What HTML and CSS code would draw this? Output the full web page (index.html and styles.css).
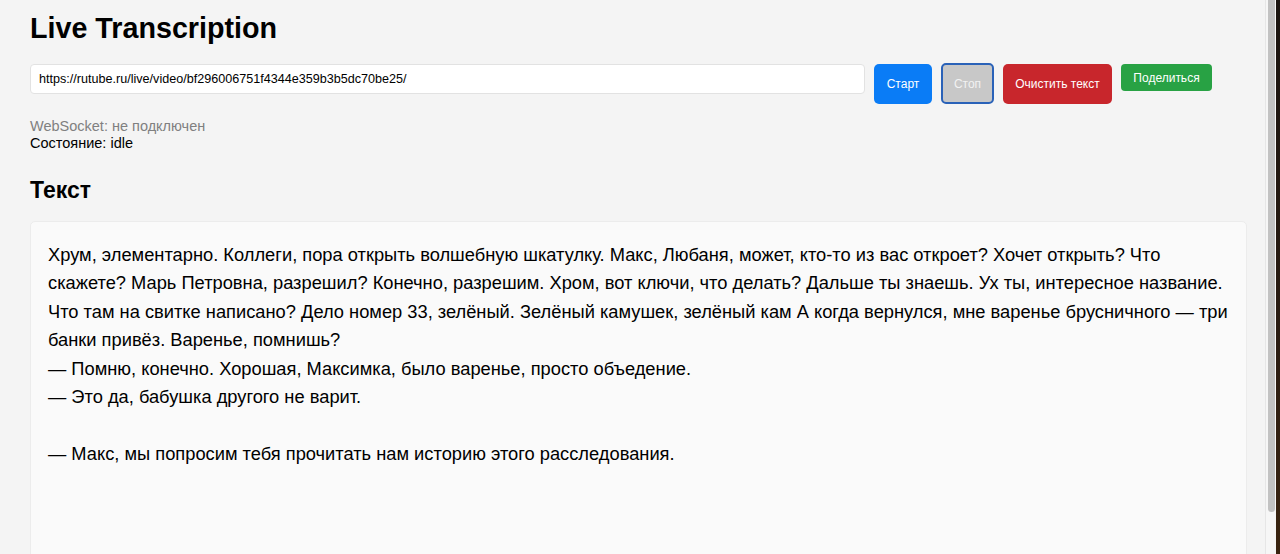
FILE: index.html
```html
<!DOCTYPE html>
<html lang="ru">
<head>
<meta charset="utf-8">
<title>Live Transcription</title>
<link rel="stylesheet" href="styles.css">
</head>
<body>
<div class="window">
  <main class="page">
    <h1 class="title">Live Transcription</h1>
    <div class="controls">
      <input class="url" type="text" value="https://rutube.ru/live/video/bf296006751f4344e359b3b5dc70be25/">
      <button class="btn btn-start">Старт</button>
      <button class="btn btn-stop">Стоп</button>
      <button class="btn btn-clear">Очистить текст</button>
      <button class="btn btn-share">Поделиться</button>
    </div>
    <div class="status">
      <div class="ws">WebSocket: не подключен</div>
      <div class="state">Состояние: idle</div>
    </div>
    <h2 class="subtitle">Текст</h2>
    <div class="transcript">Хрум, элементарно. Коллеги, пора открыть волшебную шкатулку. Макс, Любаня, может, кто-то из вас откроет? Хочет открыть? Что скажете? Марь Петровна, разрешил? Конечно, разрешим. Хром, вот ключи, что делать? Дальше ты знаешь. Ух ты, интересное название. Что там на свитке написано? Дело номер 33, зелёный. Зелёный камушек, зелёный кам А когда вернулся, мне варенье брусничного — три банки привёз. Варенье, помнишь?
— Помню, конечно. Хорошая, Максимка, было варенье, просто объедение.
— Это да, бабушка другого не варит.

— Макс, мы попросим тебя прочитать нам историю этого расследования.</div>
  </main>
  <div class="scrollbar"><div class="thumb"></div></div>
  <div class="edge"></div>
</div>
</body>
</html>
```

FILE: styles.css
```css
* { box-sizing: border-box; }
html, body {
  margin: 0;
  padding: 0;
  height: 554px;
  overflow: hidden;
}
body {
  font-family: "Liberation Sans", Arial, sans-serif;
  background: #f4f4f4;
  color: #000;
}
.window {
  display: flex;
  height: 554px;
}
.page {
  flex: 1;
  padding: 0 18px 0 30px;
  min-width: 0;
}
.title {
  font-size: 28.7px;
  line-height: 32px;
  font-weight: bold;
  margin: 12px 0 0;
}
.controls {
  display: flex;
  align-items: flex-start;
  gap: 9px;
  margin: 20px 35px 0 0;
}
.url {
  flex: 1;
  height: 30px;
  border: 1px solid #e2e2e2;
  border-radius: 4px;
  background: #fff;
  padding: 0 8px;
  font-family: "Liberation Sans", Arial, sans-serif;
  font-size: 12.6px;
  color: #000;
  outline: none;
}
.btn {
  font-family: "Liberation Sans", Arial, sans-serif;
  font-size: 12px;
  color: #fff;
  border: none;
  border-radius: 5px;
  height: 40px;
  padding: 0;
  cursor: pointer;
}
.btn-start { background: #0a7cf6; width: 58px; }
.btn-stop {
  background: #c8c8c8;
  color: #f2f2f2;
  border: 2px solid #2a62b8;
  width: 53px;
  height: 41px;
  margin-top: -1px;
}
.btn-clear { background: #c8262c; width: 109px; }
.btn-share {
  background: #28a244;
  width: 91px;
  height: 27px;
  border-radius: 4px;
}
.status {
  margin-top: 14px;
  font-size: 14.5px;
  line-height: 17px;
}
.ws { color: #808080; }
.state { color: #000; }
.subtitle {
  font-size: 23px;
  line-height: 26px;
  font-weight: bold;
  margin: 25px 0 0;
}
.transcript {
  margin-top: 18px;
  min-height: 400px;
  background: #fafafa;
  border: 1px solid #ececec;
  border-radius: 5px;
  padding: 19px 17px;
  font-size: 18.3px;
  line-height: 28.4px;
  white-space: pre-wrap;
}
.scrollbar {
  width: 11px;
  flex: none;
  background: #f6f6f6;
  border-left: 1px solid #e6e6e6;
  padding: 0 1px 0 2px;
}
.thumb {
  width: 7px;
  height: 512px;
  background: #c2c2c2;
  border-radius: 0 0 4px 4px;
}
.edge {
  width: 4px;
  flex: none;
  background: linear-gradient(#1a1410, #2a1c12 60%, #3a2410);
}
```
